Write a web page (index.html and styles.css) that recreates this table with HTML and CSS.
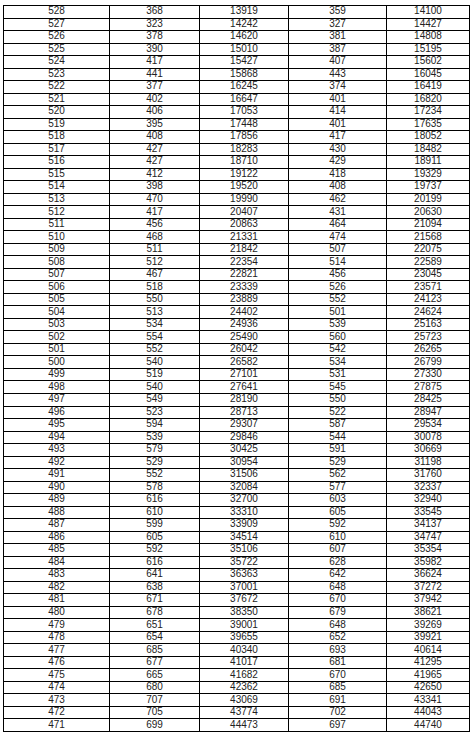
FILE: index.html
```html
<!DOCTYPE html>
<html lang="en">
<head>
<meta charset="utf-8">
<title>Table</title>
<link rel="stylesheet" href="styles.css">
</head>
<body>
<div class="sheet" id="sheet"></div>
<script src="app.js"></script>
</body>
</html>
```

FILE: app.js
```js
const rows = `528 368 13919 359 14100
527 323 14242 327 14427
526 378 14620 381 14808
525 390 15010 387 15195
524 417 15427 407 15602
523 441 15868 443 16045
522 377 16245 374 16419
521 402 16647 401 16820
520 406 17053 414 17234
519 395 17448 401 17635
518 408 17856 417 18052
517 427 18283 430 18482
516 427 18710 429 18911
515 412 19122 418 19329
514 398 19520 408 19737
513 470 19990 462 20199
512 417 20407 431 20630
511 456 20863 464 21094
510 468 21331 474 21568
509 511 21842 507 22075
508 512 22354 514 22589
507 467 22821 456 23045
506 518 23339 526 23571
505 550 23889 552 24123
504 513 24402 501 24624
503 534 24936 539 25163
502 554 25490 560 25723
501 552 26042 542 26265
500 540 26582 534 26799
499 519 27101 531 27330
498 540 27641 545 27875
497 549 28190 550 28425
496 523 28713 522 28947
495 594 29307 587 29534
494 539 29846 544 30078
493 579 30425 591 30669
492 529 30954 529 31198
491 552 31506 562 31760
490 578 32084 577 32337
489 616 32700 603 32940
488 610 33310 605 33545
487 599 33909 592 34137
486 605 34514 610 34747
485 592 35106 607 35354
484 616 35722 628 35982
483 641 36363 642 36624
482 638 37001 648 37272
481 671 37672 670 37942
480 678 38350 679 38621
479 651 39001 648 39269
478 654 39655 652 39921
477 685 40340 693 40614
476 677 41017 681 41295
475 665 41682 670 41965
474 680 42362 685 42650
473 707 43069 691 43341
472 705 43774 702 44043
471 699 44473 697 44740`;
const sheet = document.getElementById('sheet');
const frag = document.createDocumentFragment();
rows.split('\n').forEach(line => {
  line.trim().split(/\s+/).forEach(v => {
    const c = document.createElement('div');
    c.className = 'cell';
    c.textContent = v;
    frag.appendChild(c);
  });
});
sheet.appendChild(frag);
```

FILE: styles.css
```css
html, body {
  margin: 0;
  padding: 0;
  background: #fff;
}
.sheet {
  display: grid;
  grid-template-columns: 105px 89px 88px 97px 82px;
  grid-auto-rows: 11.526px;
  gap: 1px;
  padding: 1px;
  background: #000;
  width: max-content;
  margin: 5px 0 0 3px;
}
.cell {
  background: #fff;
  display: flex;
  align-items: center;
  justify-content: center;
  font-family: "Liberation Sans", Arial, sans-serif;
  font-size: 10px;
  line-height: 1;
  color: #222;
  padding-bottom: 1px;
}
```
